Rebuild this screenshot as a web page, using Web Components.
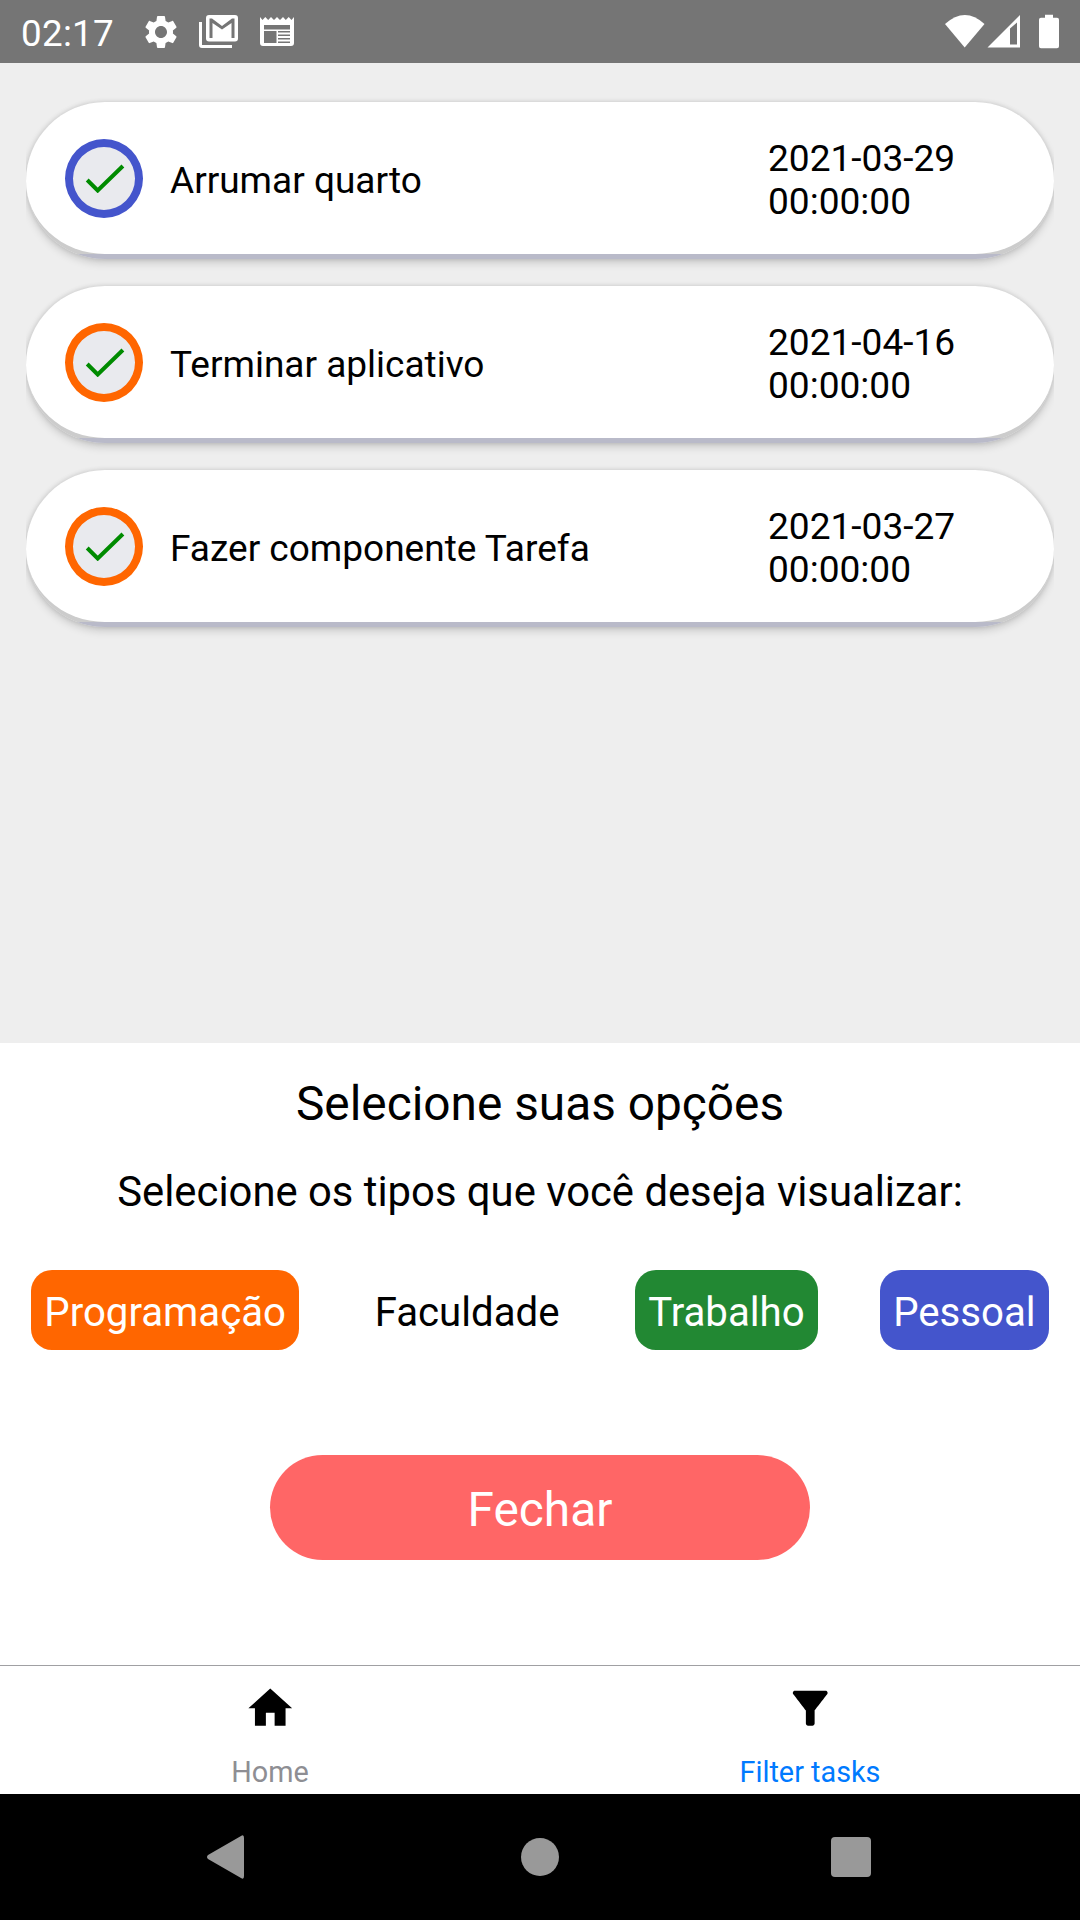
<!DOCTYPE html>
<html lang="pt-BR">
<head>
<meta charset="utf-8">
<title>Tarefas</title>
<style>
html,body{margin:0;padding:0;background:#000}
body{font-family:Roboto,sans-serif;color:#000}
</style>
</head>
<body>
<app-screen></app-screen>
<script>
const define = (name, html) => customElements.define(name, class extends HTMLElement {
  constructor() {
    super();
    this.attachShadow({ mode: 'open' }).innerHTML = html;
  }
});

define('status-bar', `
<style>
:host{display:flex;height:63px;flex:none;background:#757575;color:#fff;align-items:center;box-sizing:border-box;padding:0 17px 0 21px}
.time{font-size:36.75px;line-height:43px;width:120px;letter-spacing:.3px;padding-top:4px}
svg{display:block;fill:#fff;flex:none}
.gap{flex:1}
</style>
<span class="time">02:17</span>
<svg width="40" height="40" viewBox="0 0 24 24"><path d="M19.14 12.94c.04-.3.06-.61.06-.94 0-.32-.02-.64-.07-.94l2.03-1.58c.18-.14.23-.41.12-.61l-1.92-3.32c-.12-.22-.37-.29-.59-.22l-2.39.96c-.5-.38-1.03-.7-1.62-.94l-.36-2.54c-.04-.24-.24-.41-.48-.41h-3.84c-.24 0-.43.17-.47.41l-.36 2.54c-.59.24-1.13.57-1.62.94l-2.39-.96c-.22-.08-.47 0-.59.22L2.74 8.87c-.12.21-.08.47.12.61l2.03 1.58c-.05.3-.09.63-.09.94s.02.64.07.94l-2.03 1.58c-.18.14-.23.41-.12.61l1.92 3.32c.12.22.37.29.59.22l2.39-.96c.5.38 1.03.7 1.62.94l.36 2.54c.05.24.24.41.48.41h3.84c.24 0 .44-.17.47-.41l.36-2.54c.59-.24 1.13-.56 1.62-.94l2.39.96c.22.08.47 0 .59-.22l1.92-3.32c.12-.22.07-.47-.12-.61l-2.01-1.58zM12 15.6c-1.98 0-3.6-1.62-3.6-3.6s1.62-3.6 3.6-3.6 3.6 1.62 3.6 3.6-1.62 3.6-3.6 3.6z"/></svg>
<svg width="39" height="33" viewBox="0 0 39 33" style="margin-left:18px"><path d="M0 7h3v23h30v3H3q-3 0-3-3z"/><path fill-rule="evenodd" d="M10 0h26q3 0 3 3v20.500q0 3-3 3H10q-3 0-3-3V3q0-3 3-3zM10.500 3.500V23H13.500V8l9.500 6.500 9.500-6.500V23h3V3.500H33l-10 7.500-10-7.500z"/></svg>
<svg width="34" height="30" viewBox="0 0 34 30" style="margin-left:22px"><path fill-rule="evenodd" d="M0 0l2.500 3L5.300 0l2.900 3L11 0l3 3 3-3 3 3 3-3 2.800 3 2.900-3 2.800 3L34 0v26q0 3-3 3H3q-3 0-3-3zM4 8v4.500h26V8zM4 14v12h12.500V14zM18 14v1.500h12V14zM18 17.500v1.500h12v-1.500zM18 21v1.500h12V21zM18 24.500V26h12v-1.500z"/></svg>
<span class="gap"></span>
<svg width="118" height="36" viewBox="0 0 118 36"><path d="M0 10Q20 -8 39.500 10L19.700 33.500z"/><path fill-rule="evenodd" d="M42.500 33.500L75 1v32.500zM65 14.500v16h7v-22z"/><path d="M100 0.800h8v3h4q2 0 2 2v26.500q0 2-2 2H96q-2 0-2-2V5.800q0-2 2-2h4z"/></svg>
`);

define('task-card', `
<style>
:host{display:block;clip-path:inset(-30px 0 -30px 0)}
.card{height:157px;border-radius:79px;background:linear-gradient(#ccc 152.500px,#b9bac9 152.500px);
 box-shadow:0 4px 9px rgba(0,0,0,.15),0 0 5px rgba(0,0,0,.13)}
.face{height:152px;background:#fff;border-radius:79px 79px 79px 79px/79px 79px 73px 73px;box-sizing:border-box;display:flex;align-items:center;padding:0 39px}
.ring{width:78px;height:79px;box-sizing:border-box;border:8px solid var(--kind);border-radius:50%;background:#e9eaee;flex:none;display:flex;align-items:center;justify-content:center}
.name{flex:1;font-size:37px;line-height:43px;padding:5px 0 0 27px;white-space:nowrap}
.date{width:247px;font-size:37.100px;line-height:43px;padding-top:4px}
.date ::slotted(span){display:block}
svg{display:block}
</style>
<div class="card"><div class="face"><div class="ring"><svg width="42" height="30" viewBox="-1 0 42 30"><path d="M3.200 17L13.700 27.500L38.900 3" fill="none" stroke="#008b00" stroke-width="4"/></svg></div>
<div class="name"><slot></slot></div><div class="date"><slot name="date"></slot></div></div></div>
`);

define('filter-tag', `
<style>
:host{display:block;box-sizing:border-box;height:80px;padding:0 13px;border-radius:21px;font-size:40.200px;line-height:85px;white-space:nowrap;background:var(--fill,transparent);color:var(--ink,#fff)}
</style><slot></slot>`);

define('filter-sheet', `
<style>
:host{display:flex;flex-direction:column;height:622px;flex:none;background:#fff;align-items:center}
h1,p{font-weight:400;margin:0;white-space:nowrap}
h1{font-size:47.800px;line-height:56px;margin-top:33px}
p{font-size:41.800px;line-height:50px;margin-top:35px}
.tags{display:flex;justify-content:space-around;width:100%;margin-top:53px}
button{border:0;margin:105px 0 0;padding:5px 0 0;width:540px;height:105px;border-radius:52.500px;background:#f66;color:#fff;font:400 47.800px/56px Roboto,sans-serif}
</style>
<h1>Selecione suas opções</h1>
<p>Selecione os tipos que você deseja visualizar:</p>
<div class="tags">
<filter-tag style="--fill:#f60">Programação</filter-tag>
<filter-tag style="--ink:#000">Faculdade</filter-tag>
<filter-tag style="--fill:#283">Trabalho</filter-tag>
<filter-tag style="--fill:#45c">Pessoal</filter-tag>
</div>
<button>Fechar</button>
`);

define('tab-item', `
<style>
:host{display:flex;flex:1;flex-direction:column;align-items:center;color:var(--tint)}
.icon{height:52px;margin-top:16px;display:block}
.label{font-size:28.800px;line-height:34px;margin-top:21px}
</style><div class="icon"><slot name="icon"></slot></div><div class="label"><slot></slot></div>`);

define('tab-bar', `
<style>:host{display:flex;height:129px;box-sizing:border-box;flex:none;background:#fff;border-top:1px solid #a0a0a3}svg{display:block}</style>
<tab-item style="--tint:#8e8e93"><svg slot="icon" width="52.500" height="52.500" viewBox="0 0 24 24"><path d="M10 20v-6h4v6h5v-8h3L12 3 2 12h3v8z"/></svg>Home</tab-item>
<tab-item style="--tint:#007aff"><svg slot="icon" width="52.500" height="52.500" viewBox="0 0 24 24"><path d="M4.250 5.610C6.270 8.200 10 13 10 13v6c0 .55.45 1 1 1h2c.55 0 1-.45 1-1v-6s3.720-4.800 5.740-7.390c.51-.66.04-1.610-.79-1.610H5.040c-.83 0-1.300.95-.79 1.610z"/></svg>Filter tasks</tab-item>
`);

define('system-nav', `
<style>
:host{display:flex;height:126px;flex:none;background:#000;justify-content:space-between;align-items:center;box-sizing:border-box;padding:0 209px 0 206px}
svg{display:block;fill:#999}
</style>
<svg width="39" height="44" viewBox="0 0 39 44"><path d="M35 1Q38 -1 38 3v38q0 4-3 2L2 24Q0 22 2 20z"/></svg>
<svg width="40" height="40" viewBox="0 0 40 40" style="margin-left:4px"><circle cx="20" cy="20" r="19"/></svg>
<svg width="41" height="40" viewBox="0 0 41 40"><rect x="1" width="40" height="40" rx="4"/></svg>
`);

define('app-screen', `
<style>
:host{display:flex;flex-direction:column;width:1080px;height:1920px;overflow:hidden;background:#eee}
.list{flex:1;display:flex;flex-direction:column;gap:27px;padding:39px 26px 0}
</style>
<status-bar></status-bar>
<div class="list">
<task-card style="--kind:#45c">Arrumar quarto<span slot="date">2021-03-29</span><span slot="date">00:00:00</span></task-card>
<task-card style="--kind:#f60">Terminar aplicativo<span slot="date">2021-04-16</span><span slot="date">00:00:00</span></task-card>
<task-card style="--kind:#f60">Fazer componente Tarefa<span slot="date">2021-03-27</span><span slot="date">00:00:00</span></task-card>
</div>
<filter-sheet></filter-sheet>
<tab-bar></tab-bar>
<system-nav></system-nav>
`);
</script>
</body>
</html>
